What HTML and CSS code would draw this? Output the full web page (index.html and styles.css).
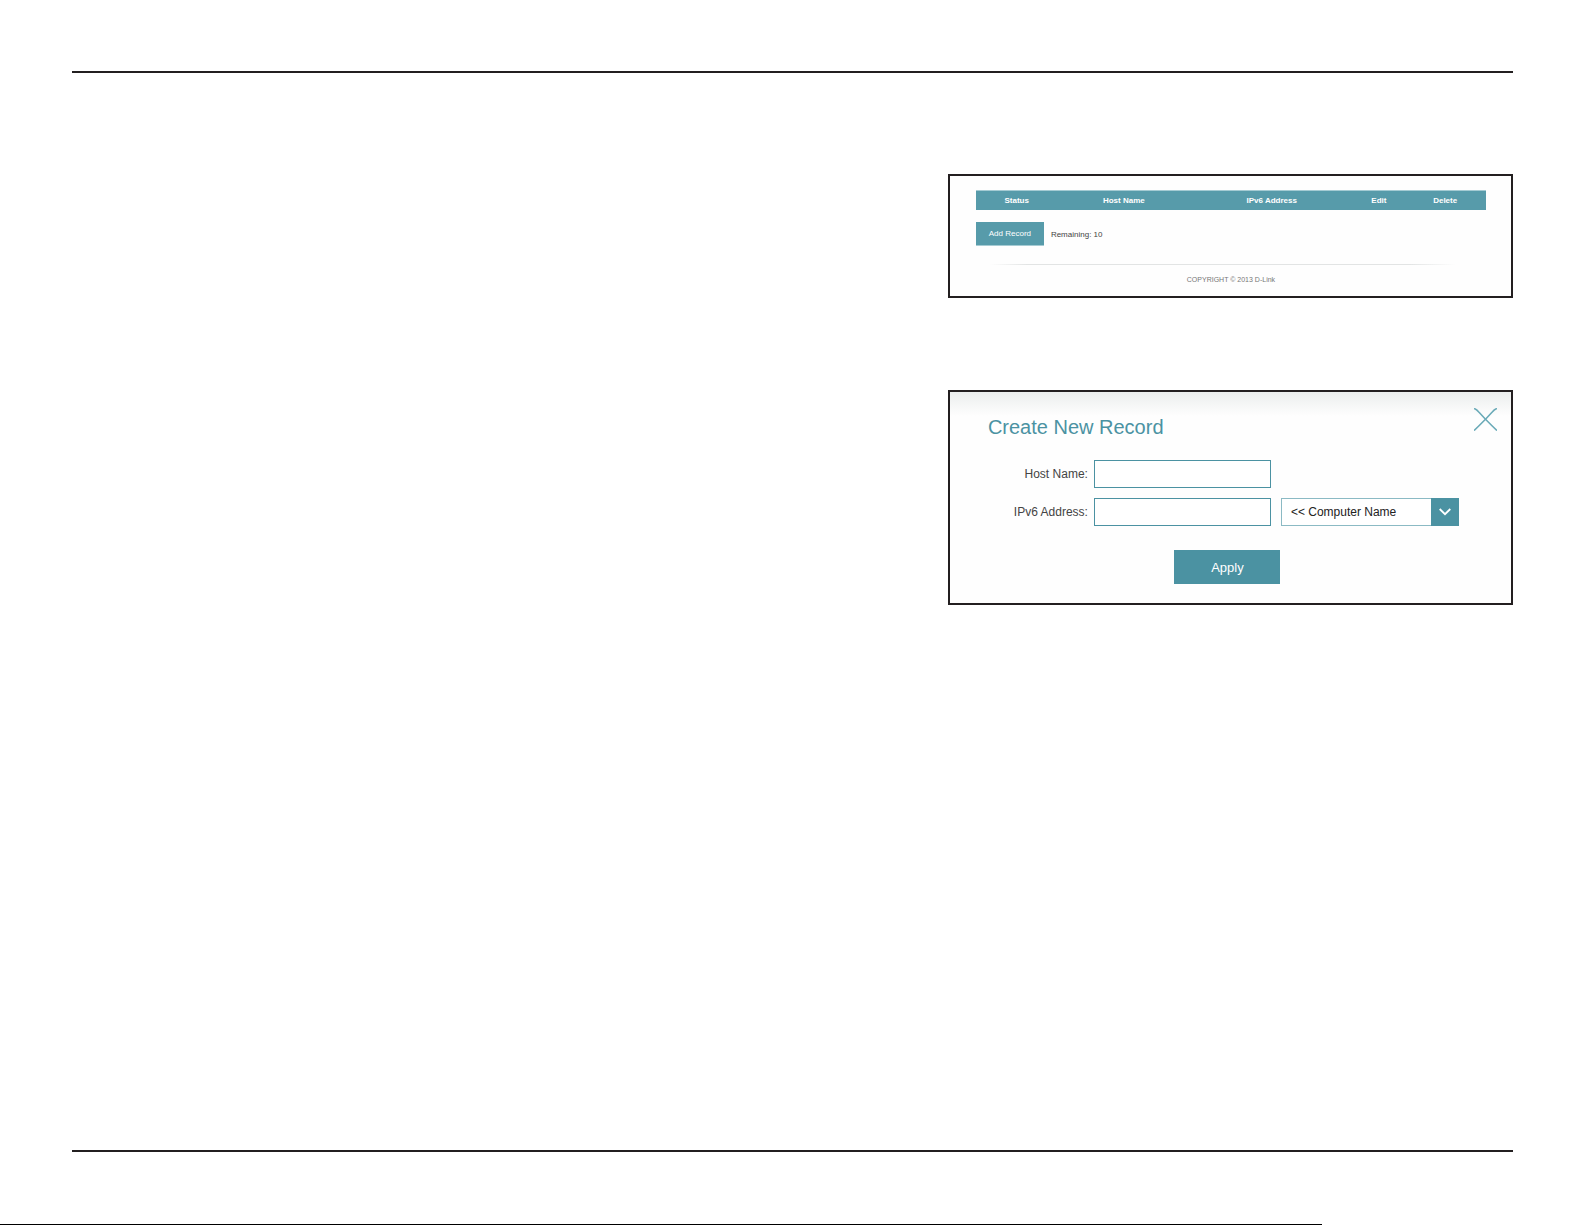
FILE: index.html
```
<!DOCTYPE html>
<html lang="en">
<head>
    <meta charset="UTF-8">
    <meta name="viewport" content="width=device-width, initial-scale=1.0">
    <title>IPv6 Host Records</title>
    <link rel="stylesheet" href="styles.css">
</head>
<body>
    <header class="page-header"></header>

    <main class="content">
        <div class="screens">
            <section class="panel records">
                <table class="records-table">
                    <colgroup>
                        <col class="col-status">
                        <col class="col-host">
                        <col class="col-address">
                        <col class="col-edit">
                        <col class="col-delete">
                    </colgroup>
                    <thead>
                        <tr>
                            <th>Status</th>
                            <th>Host Name</th>
                            <th>IPv6 Address</th>
                            <th>Edit</th>
                            <th>Delete</th>
                        </tr>
                    </thead>
                </table>
                <div class="records-actions">
                    <button type="button" class="add-button">Add Record</button>
                    <span>Remaining: 10</span>
                </div>
                <div class="divider"></div>
                <p class="copyright">COPYRIGHT © 2013 D-Link</p>
            </section>

            <section class="panel dialog">
                <button type="button" class="close-button" aria-label="Close">
                    <svg width="23" height="23" viewBox="0 0 23 23" fill="none" stroke="#6babb8" stroke-width="1.6">
                        <path d="M0 .5C2 1 3.500 2.500 5 4.200L11.500 11.200L18.500 18.200L23 22.600"/>
                        <path d="M23 .5C21 1 19.500 2.500 18 4.200L11.500 11.200L4.500 18.200L0 22.600"/>
                    </svg>
                </button>
                <h2>Create New Record</h2>
                <form>
                    <div class="form-row">
                        <label for="hostName">Host Name:</label>
                        <input type="text" id="hostName">
                    </div>
                    <div class="form-row">
                        <label for="ipv6Address">IPv6 Address:</label>
                        <input type="text" id="ipv6Address">
                        <div class="select-box">
                            <select id="computerName" aria-label="Computer Name">
                                <option>&lt;&lt; Computer Name</option>
                            </select>
                            <span class="select-arrow">
                                <svg width="12" height="8" viewBox="0 0 12 8" fill="none" stroke="#fff" stroke-width="1.8">
                                    <path d="M.7 1L6 6.200L11.300 1"/>
                                </svg>
                            </span>
                        </div>
                    </div>
                    <button type="button" class="apply-button">Apply</button>
                </form>
            </section>
        </div>
    </main>

    <footer class="page-footer">
        <div class="bottom-line"></div>
    </footer>
</body>
</html>
```
FILE: styles.css
```
* {
    box-sizing: border-box;
}
body {
    margin: 0;
    min-height: 100vh;
    display: flex;
    flex-direction: column;
    font-family: "Liberation Sans", Arial, sans-serif;
    background-color: #fff;
    color: #444;
}
button, input, select {
    font-family: inherit;
    margin: 0;
    border-radius: 0;
}
.page-header {
    height: 73px;
    margin: 0 72px;
    border-bottom: 2px solid #231f20;
}
.content {
    flex: 1;
    display: grid;
    grid-template-columns: 31fr 20fr;
    margin: 0 72px;
    padding-top: 101px;
}
.screens {
    grid-column: 2;
    display: flex;
    flex-direction: column;
    gap: 92px;
}
.panel {
    border: 2px solid #231f20;
    background-color: #fefefe;
}

/* record list */
.records {
    padding: 14px 25px 10px 26px;
    font-size: 8px;
}
.records-table {
    width: 100%;
    table-layout: fixed;
    border-collapse: separate;
    border-spacing: 0;
    background-color: #579baa;
}
.records-table th {
    height: 20px;
    padding: 0;
    border-top: 1px solid #a5cbd3;
    color: #fff;
    font-size: 8px;
    line-height: 12px;
}
.col-status {
    width: 16%;
}
.col-host {
    width: 26%;
}
.col-address {
    width: 32%;
}
.col-edit {
    width: 10%;
}
.col-delete {
    width: 16%;
}
.records-actions {
    display: flex;
    align-items: center;
    gap: 7px;
    margin-top: 12px;
}
.add-button {
    width: 68px;
    height: 24px;
    padding: 0;
    border: none;
    border-bottom: 1px solid #a5cbd3;
    background-color: #579baa;
    color: #fff;
    font-size: 8px;
    cursor: pointer;
}
.divider {
    height: 1px;
    margin: 18px 30px 0 14px;
    background: linear-gradient(to right, #fefefe, #e2e4e4 8%, #e2e4e4 90%, #fefefe);
}
.copyright {
    margin: 9px 0 0;
    color: #777;
    font-size: 7px;
    line-height: 12px;
    text-align: center;
}

/* new record dialog */
.dialog {
    position: relative;
    padding: 23px 44px 19px 38px;
    background-image: linear-gradient(#ebeeed, #fefefe 24px);
}
.dialog h2 {
    margin: 0 0 21px;
    color: #4b92a2;
    font-size: 20px;
    font-weight: normal;
    line-height: 24px;
}
.close-button {
    position: absolute;
    top: 16px;
    right: 14px;
    padding: 0;
    border: none;
    background: none;
    cursor: pointer;
}
.close-button svg, .select-arrow svg {
    display: block;
}
.form-row {
    display: flex;
    align-items: center;
    margin-bottom: 10px;
    font-size: 12px;
}
.form-row label {
    width: 100px;
    margin-right: 6px;
    text-align: right;
}
.form-row input {
    width: 177px;
    height: 28px;
    padding: 0 8px;
    border: 1px solid #4b92a2;
    background-color: #fff;
}
.select-box {
    position: relative;
    width: 178px;
    margin-left: 10px;
}
.select-box select {
    display: block;
    appearance: none;
    width: 100%;
    height: 28px;
    padding: 0 36px 0 9px;
    border: 1px solid #8bbac4;
    background-color: #fff;
    color: #222;
    font-size: 12px;
}
.select-arrow {
    position: absolute;
    top: 0;
    right: 0;
    display: flex;
    align-items: center;
    justify-content: center;
    width: 28px;
    height: 100%;
    background-color: #4b92a2;
    pointer-events: none;
}
.apply-button {
    display: block;
    width: 106px;
    height: 34px;
    margin: 24px auto 0;
    padding: 0;
    border: none;
    background-color: #4b92a2;
    color: #fff;
    font-size: 13px;
    cursor: pointer;
}

.page-footer {
    display: flex;
    flex-direction: column;
    justify-content: flex-end;
    height: 75px;
}
.page-footer::before {
    content: "";
    height: 2px;
    margin: 0 72px auto;
    background-color: #231f20;
}
.bottom-line {
    width: 83.4%;
    height: 1px;
    background-color: #000;
}
```
